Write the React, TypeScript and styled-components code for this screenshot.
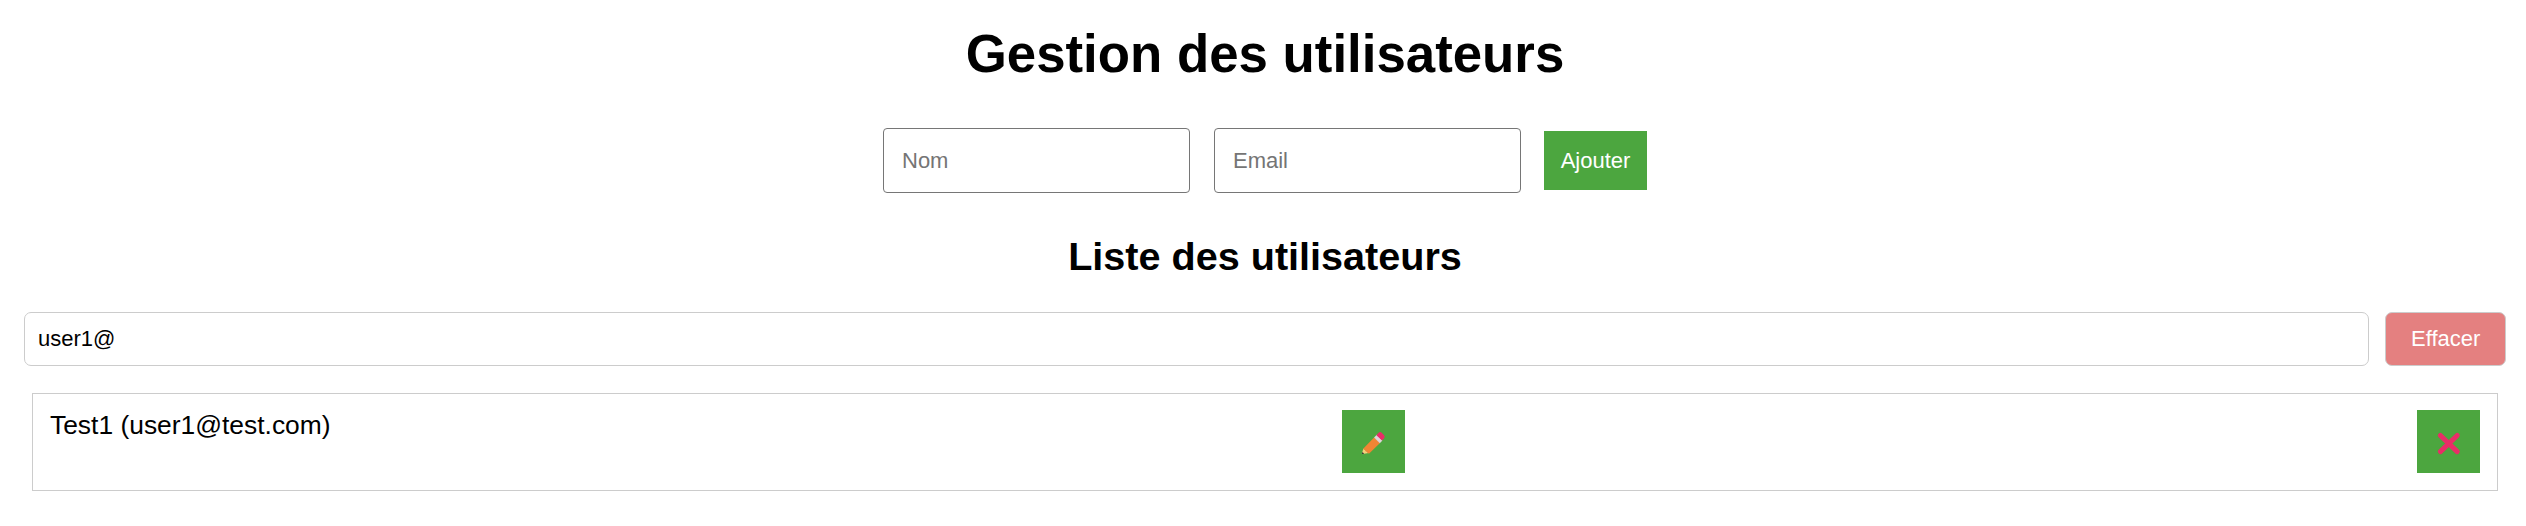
import React, { useState } from "react";
import styled, { createGlobalStyle } from "styled-components";

const GlobalStyle = createGlobalStyle`
  * { box-sizing: border-box; }
  body {
    margin: 0;
    background: #fff;
    color: #000;
    font-family: Arial, "Liberation Sans", sans-serif;
  }
`;

const Page = styled.main`
  display: flex;
  flex-direction: column;
  min-height: 526px;
  padding: 24px 20px 0 24px;
`;

const Title = styled.h1`
  margin: 0 0 44px;
  font-size: 52.8px;
  line-height: 60px;
  text-align: center;
`;

const Subtitle = styled.h2`
  margin: 0 0 33px;
  font-size: 39.6px;
  line-height: 46px;
  text-align: center;
`;

const UserForm = styled.form`
  display: flex;
  justify-content: center;
  align-items: center;
  height: 65px;
  margin-bottom: 40px;
`;

const Field = styled.input`
  width: 307px;
  height: 65px;
  margin: 0 24px 0 0;
  padding: 0 18px;
  border: 1px solid #767676;
  border-radius: 4px;
  background: #fff;
  font: 22px Arial, "Liberation Sans", sans-serif;
  outline: none;
  &::placeholder { color: #757575; opacity: 1; }
  &:last-of-type { margin-right: 23px; }
`;

const ActionButton = styled.button<{ $square?: boolean }>`
  display: flex;
  align-items: center;
  justify-content: center;
  flex: none;
  width: ${(p) => (p.$square ? "63px" : "103px")};
  height: ${(p) => (p.$square ? "63px" : "59px")};
  padding: 0;
  border: 0;
  background: #4ca63f;
  color: #fff;
  font: 22px Arial, "Liberation Sans", sans-serif;
  cursor: pointer;
`;

const SearchBar = styled.div`
  display: flex;
  gap: 16px;
  height: 54px;
  margin-bottom: 27px;
`;

const SearchInput = styled.input`
  flex: 1;
  min-width: 0;
  padding: 0 13px;
  border: 1px solid #ccc;
  border-radius: 7px;
  background: #fff;
  color: #000;
  font: 22px Arial, "Liberation Sans", sans-serif;
  outline: none;
`;

const ClearButton = styled.button`
  width: 121px;
  padding: 0 0 0 25px;
  border: 1px solid #ccc;
  border-radius: 7px;
  background: #e48080;
  color: #fff;
  font: 22px Arial, "Liberation Sans", sans-serif;
  text-align: left;
  cursor: pointer;
`;

const UserList = styled.ul`
  margin: 0 8px;
  padding: 0;
  list-style: none;
`;

const UserItem = styled.li`
  display: flex;
  justify-content: space-between;
  align-items: flex-start;
  height: 98px;
  padding: 16px 17px;
  border: 1px solid #ccc;
  font-size: 26.4px;
  line-height: 30px;
`;

const PencilIcon = () => (
  <svg width="63" height="63" viewBox="0 0 63 63" aria-hidden="true">
    <path d="M21.4 38.6L20 43.3Q19.9 44.3 20.9 44.1L26.4 43Z" fill="#f6cf7c" />
    <path d="M21.4 38.4L32.3 27.3L38 33L27.2 43.4Q25.4 44 25.2 41.8Q22.9 41.9 23 39.8Q20.8 39.6 21.4 38.4Z" fill="#f08534" />
    <path d="M32.1 27.5L34.8 24.8L40.4 30.5L37.8 33.2Z" fill="#dfd5da" />
    <path d="M34.4 25.2L36.6 22.8Q38 21.2 39.4 22.5L42.1 25.2Q43.4 26.6 42.1 28.2L40 30.5Z" fill="#e92d67" />
    <path d="M20.5 42L20 43.4Q19.9 44.3 20.8 44.1L22.2 43.8Z" fill="#303030" />
  </svg>
);

const CrossIcon = () => (
  <svg width="63" height="63" viewBox="0 0 63 63" aria-hidden="true">
    <path d="M23.4 25.5L40.2 41.6M40.2 25.5L23.4 41.6" fill="none" stroke="#e92d67" strokeWidth="5.1" strokeLinecap="round" />
  </svg>
);

export default function App() {
  const [search, setSearch] = useState("user1@");
  const users = [{ name: "Test1", email: "user1@test.com" }];
  return (
    <Page>
      <GlobalStyle />
      <Title>Gestion des utilisateurs</Title>
      <UserForm onSubmit={(e) => e.preventDefault()}>
        <Field placeholder="Nom" />
        <Field placeholder="Email" />
        <ActionButton type="submit">Ajouter</ActionButton>
      </UserForm>
      <Subtitle>Liste des utilisateurs</Subtitle>
      <SearchBar>
        <SearchInput value={search} onChange={(e) => setSearch(e.target.value)} />
        <ClearButton onClick={() => setSearch("")}>Effacer</ClearButton>
      </SearchBar>
      <UserList>
        {users
          .filter((u) => u.email.includes(search))
          .map((u) => (
            <UserItem key={u.email}>
              <span>{u.name} ({u.email})</span>
              <ActionButton $square aria-label="Modifier"><PencilIcon /></ActionButton>
              <ActionButton $square aria-label="Supprimer"><CrossIcon /></ActionButton>
            </UserItem>
          ))}
      </UserList>
    </Page>
  );
}
